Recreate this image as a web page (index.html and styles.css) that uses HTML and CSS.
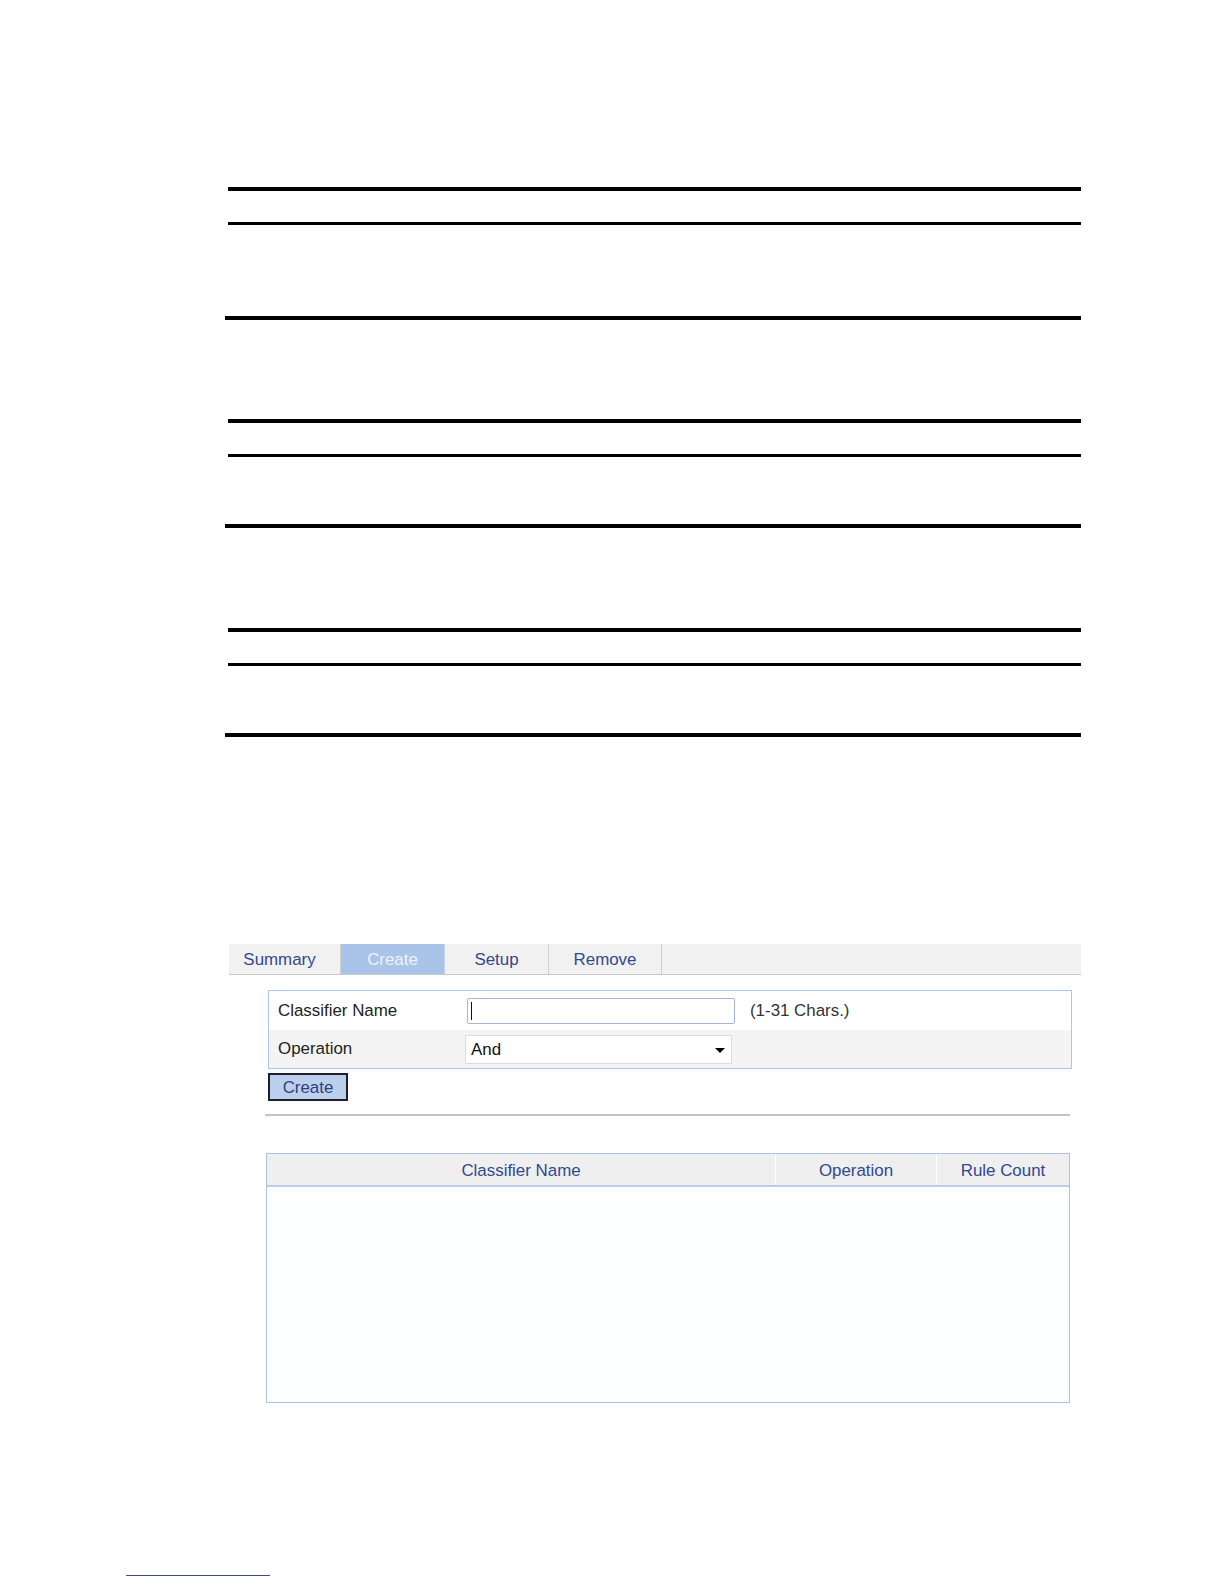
FILE: index.html
```html
<!DOCTYPE html>
<html>
<head>
<meta charset="utf-8">
<link rel="stylesheet" href="styles.css">
</head>
<body>
<div class="page">
  <div class="rt">
    <div class="rt-head"></div>
    <div class="rt-body tall"></div>
    <div class="rt-foot"></div>
  </div>
  <div class="rt gap">
    <div class="rt-head"></div>
    <div class="rt-body"></div>
    <div class="rt-foot"></div>
  </div>
  <div class="rt gap2">
    <div class="rt-head"></div>
    <div class="rt-body"></div>
    <div class="rt-foot"></div>
  </div>

  <div class="tabs">
    <div class="tab tab-summary">Summary</div>
    <div class="tab tab-active">Create</div>
    <div class="tab">Setup</div>
    <div class="tab tab-remove">Remove</div>
  </div>

  <div class="content">
    <div class="formbox">
      <div class="frow">
        <div class="flabel">Classifier Name</div>
        <div class="textbox"><span class="caret"></span></div>
        <div class="hint">(1-31 Chars.)</div>
      </div>
      <div class="frow alt">
        <div class="flabel">Operation</div>
        <div class="selectbox"><span>And</span><span class="arrow"></span></div>
      </div>
    </div>
    <div class="btnrow"><div class="btn">Create</div></div>
    <div class="sep"></div>

    <div class="grid">
      <div class="ghead">
        <div class="gcol c1">Classifier Name</div>
        <div class="gcol c2">Operation</div>
        <div class="gcol c3">Rule Count</div>
      </div>
      <div class="gbody"></div>
    </div>
  </div>

  <div class="footline"></div>
</div>
</body>
</html>
```

FILE: styles.css
```css
html, body {
  margin: 0;
  padding: 0;
  background: #ffffff;
}
body {
  font-family: "Liberation Sans", Arial, sans-serif;
  font-size: 16.9px;
  color: #222222;
}
.page {
  width: 1224px;
  padding-top: 187px;
  min-height: 1584px;
  box-sizing: border-box;
}

/* rule tables */
.rt {
  margin-left: 228px;
  width: 853px;
}
.rt.gap { margin-top: 99px; }
.rt.gap2 { margin-top: 100px; }
.rt-head {
  border-top: 4px solid #000;
  border-bottom: 3px solid #000;
  height: 31px;
}
.rt-body { height: 67px; }
.rt-body.tall { height: 91px; }
.rt-foot {
  height: 4px;
  background: #000;
  margin-left: -3px;
}

/* tabs */
.tabs {
  margin-top: 207px;
  margin-left: 229px;
  width: 852px;
  height: 31px;
  background: #f1f1f1;
  border-bottom: 1px solid #c9c9c9;
  box-sizing: border-box;
  display: flex;
}
.tab {
  width: 104px;
  border-right: 1px solid #cfcfcf;
  display: flex;
  align-items: center;
  justify-content: center;
  color: #34488e;
  padding-top: 2px;
  box-sizing: border-box;
}
.tab-summary { width: 112px; padding-right: 10px; }
.tab-remove { width: 113px; }
.tab-active {
  background: #a9c3e9;
  color: #eef3fb;
  border-right: 1px solid #c4d3ea;
}

/* content */
.content {
  margin-left: 265px;
  width: 806px;
}
.formbox {
  margin-top: 15px;
  margin-left: 3px;
  width: 804px;
  border: 1px solid #b1c5e4;
  box-sizing: border-box;
}
.frow {
  display: flex;
  align-items: center;
  height: 39px;
  background: #ffffff;
}
.frow.alt {
  height: 38px;
  background: #f4f4f4;
}
.flabel {
  width: 189px;
  padding-left: 9px;
  flex-shrink: 0;
}
.textbox {
  width: 268px;
  height: 26px;
  border: 1px solid #a3b8d0;
  border-radius: 2px;
  box-sizing: border-box;
  background: #fff;
  display: flex;
  align-items: center;
  padding-left: 3px;
}
.caret {
  width: 1px;
  height: 18px;
  background: #111;
}
.hint {
  margin-left: 15px;
  color: #333;
}
.selectbox {
  margin-left: -2px;
  width: 267px;
  height: 29px;
  border: 1px solid #dddddd;
  background: #fff;
  box-sizing: border-box;
  display: flex;
  align-items: center;
  justify-content: space-between;
  padding: 2px 6px 0 5px;
  color: #111;
}
.arrow {
  width: 0;
  height: 0;
  border-left: 5px solid transparent;
  border-right: 5px solid transparent;
  border-top: 5px solid #000;
  margin-top: 1px;
}
.btnrow {
  margin-top: 4px;
  margin-left: 3px;
  display: flex;
}
.btn {
  width: 80px;
  height: 28px;
  box-sizing: border-box;
  border: 2px solid #1d1d2b;
  background: #bcd0ee;
  color: #2e3f7d;
  display: flex;
  align-items: center;
  justify-content: center;
  padding-top: 2px;
}
.sep {
  margin-top: 13px;
  width: 805px;
  height: 2px;
  background: #c4c4c4;
}

/* grid */
.grid {
  margin-top: 37px;
  margin-left: 1px;
  width: 804px;
  height: 250px;
  border: 1px solid #aec2e3;
  box-sizing: border-box;
  display: flex;
  flex-direction: column;
}
.ghead {
  display: flex;
  height: 33px;
  background: #efefef;
  border-bottom: 2px solid #bccee9;
  box-sizing: border-box;
}
.gcol {
  display: flex;
  align-items: center;
  justify-content: center;
  color: #30498f;
  padding-top: 3px;
  box-sizing: border-box;
}
.c1 { width: 509px; border-right: 1px solid #ffffff; }
.c2 { width: 161px; border-right: 1px solid #ffffff; }
.c3 { flex: 1; }
.gbody {
  flex: 1;
  background: #fdfefe;
}

.footline {
  margin-top: 172px;
  margin-left: 126px;
  width: 144px;
  height: 1px;
  background: #3a4a94;
}
```
